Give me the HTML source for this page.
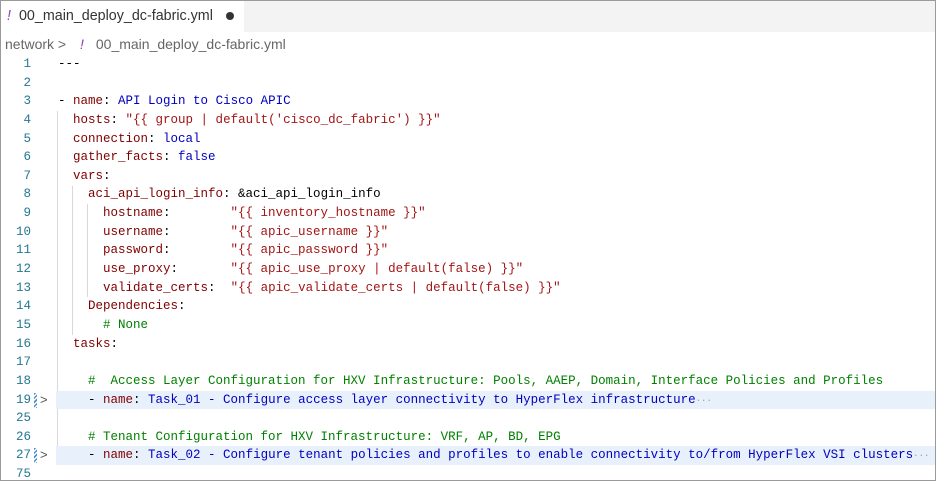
<!DOCTYPE html>
<html><head><style>
body{margin:0;width:936px;height:481px;overflow:hidden;background:#fff;font-family:"Liberation Sans",sans-serif}
.frame{position:absolute;left:0;top:0;width:934px;height:479px;border:1px solid #9a9a9a;overflow:hidden}
.tabbar{position:absolute;left:0;top:0;width:934px;height:31px;background:#f3f3f3}
.tab{position:absolute;left:0;top:0;width:243px;height:31px;background:#fff;font-size:14.3px;color:#333;line-height:30px}
.tab .ex{color:#8a3fb8;font-style:italic;margin:0 8px 0 6px}
.dot{position:absolute;left:225px;top:11px;width:8px;height:8px;border-radius:50%;background:#333}
.bc{position:absolute;left:4px;top:33px;font-size:14px;color:#666;line-height:20px}
.bc .ex{color:#8a3fb8;font-style:italic;margin:0 12px 0 10px}
.code{position:absolute;left:0;top:54px;width:934px;font-family:"Liberation Mono",monospace;font-size:12.5px}
.row{position:relative;height:18.65px;line-height:18.65px;white-space:pre}
.ln{position:absolute;left:0;width:30px;text-align:right;color:#237893}
.tx{position:absolute;left:57px}
.hl{position:absolute;left:55px;right:0;top:0;bottom:0;background:#e8f1fb}
.k{color:#800000}.s{color:#a31515}.b{color:#0000c0}.c{color:#008000}.p{color:#000}
.g{position:absolute;width:1px;background:#d8d8d8}
.arr{position:absolute;left:39px;color:#555;font-family:"Liberation Sans";font-size:13px}
.mark{position:absolute;left:33px;top:2px;width:3px;height:15px;background:repeating-linear-gradient(135deg,#4a8fd0 0 1.5px,#fff 1.5px 3px)}
.ell{color:#999;font-size:9px}
</style></head><body><div class="frame">
<div class="tabbar"><div class="tab"><span class="ex">!</span>00_main_deploy_dc-fabric.yml</div><div class="dot"></div></div>
<div class="bc">network &gt; <span class="ex">!</span>00_main_deploy_dc-fabric.yml</div>
<div class="code">
<div class="g" style="left:56px;top:56px;height:354px"></div>
<div class="g" style="left:71px;top:131px;height:149px"></div>
<div class="g" style="left:86px;top:149px;height:93px"></div>
<div class="row"><span class="ln">1</span><span class="tx">---</span></div>
<div class="row"><span class="ln">2</span></div>
<div class="row"><span class="ln">3</span><span class="tx">- <span class="k">name</span>: <span class="b">API Login to Cisco APIC</span></span></div>
<div class="row"><span class="ln">4</span><span class="tx">  <span class="k">hosts</span>: <span class="s">"{{ group | default('cisco_dc_fabric') }}"</span></span></div>
<div class="row"><span class="ln">5</span><span class="tx">  <span class="k">connection</span>: <span class="b">local</span></span></div>
<div class="row"><span class="ln">6</span><span class="tx">  <span class="k">gather_facts</span>: <span class="b">false</span></span></div>
<div class="row"><span class="ln">7</span><span class="tx">  <span class="k">vars</span>:</span></div>
<div class="row"><span class="ln">8</span><span class="tx">    <span class="k">aci_api_login_info</span>: &amp;aci_api_login_info</span></div>
<div class="row"><span class="ln">9</span><span class="tx">      <span class="k">hostname</span>:        <span class="s">"{{ inventory_hostname }}"</span></span></div>
<div class="row"><span class="ln">10</span><span class="tx">      <span class="k">username</span>:        <span class="s">"{{ apic_username }}"</span></span></div>
<div class="row"><span class="ln">11</span><span class="tx">      <span class="k">password</span>:        <span class="s">"{{ apic_password }}"</span></span></div>
<div class="row"><span class="ln">12</span><span class="tx">      <span class="k">use_proxy</span>:       <span class="s">"{{ apic_use_proxy | default(false) }}"</span></span></div>
<div class="row"><span class="ln">13</span><span class="tx">      <span class="k">validate_certs</span>:  <span class="s">"{{ apic_validate_certs | default(false) }}"</span></span></div>
<div class="row"><span class="ln">14</span><span class="tx">    <span class="k">Dependencies</span>:</span></div>
<div class="row"><span class="ln">15</span><span class="tx">      <span class="c"># None</span></span></div>
<div class="row"><span class="ln">16</span><span class="tx">  <span class="k">tasks</span>:</span></div>
<div class="row"><span class="ln">17</span></div>
<div class="row"><span class="ln">18</span><span class="tx">    <span class="c">#  Access Layer Configuration for HXV Infrastructure: Pools, AAEP, Domain, Interface Policies and Profiles</span></span></div>
<div class="row"><div class="hl"></div><span class="ln">19</span><span class="mark"></span><span class="arr">&gt;</span><span class="tx">    - <span class="k">name</span>: <span class="b">Task_01 - Configure access layer connectivity to HyperFlex infrastructure</span><span class="ell">···</span></span></div>
<div class="row"><span class="ln">25</span></div>
<div class="row"><span class="ln">26</span><span class="tx">    <span class="c"># Tenant Configuration for HXV Infrastructure: VRF, AP, BD, EPG</span></span></div>
<div class="row"><div class="hl"></div><span class="ln">27</span><span class="mark"></span><span class="arr">&gt;</span><span class="tx">    - <span class="k">name</span>: <span class="b">Task_02 - Configure tenant policies and profiles to enable connectivity to/from HyperFlex VSI clusters</span><span class="ell">···</span></span></div>
<div class="row"><span class="ln">75</span></div>
</div>
</div></body></html>
